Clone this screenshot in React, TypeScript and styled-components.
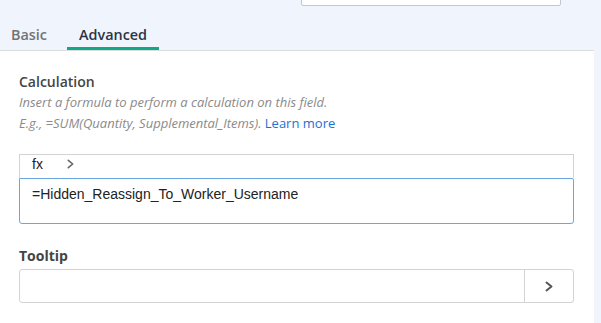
import React from "react";
import styled, {createGlobalStyle} from "styled-components";

const GlobalStyle = createGlobalStyle`
    html, body {
        margin: 0;
        padding: 0;
        background: #f0f5fd;
    }
    body {
        font-family: "Open Sans", "Noto Sans", sans-serif;
        color: #444;
    }
`;

const StyledPage = styled.div`
    width: 594px;
    min-height: 100vh;
    display: flex;
    flex-direction: column;
`;

const StyledTopBar = styled.div`
    height: 6px;
    display: flex;
    justify-content: flex-end;
    padding-right: 33px;
`;

const StyledSearchBox = styled.div`
    width: 260px;
    height: 30px;
    margin-top: -24px;
    box-sizing: border-box;
    background: #fff;
    border: 1px solid #c6c6c6;
    border-radius: 0 0 2px 2px;
`;

const StyledTabBar = styled.nav`
    height: 44px;
    display: flex;
    gap: 9px;
    border-bottom: 1px solid #dcdcdc;
`;

const StyledTab = styled.button<{ $active?: boolean }>`
    display: flex;
    align-items: flex-end;
    padding: 0 12px 2px;
    margin: 0;
    background: none;
    border: none;
    border-bottom: 3px solid ${props => props.$active ? "#10a88b" : "transparent"};
    font-family: "Open Sans", sans-serif;
    font-size: 14.4px;
    line-height: 20px;
    font-weight: 600;
    color: ${props => props.$active ? "#2b3445" : "#737373"};
    cursor: pointer;

    &:first-child {
        padding-left: 11px;
        padding-right: 11px;
    }
`;

const StyledPanel = styled.main`
    flex: 1;
    background: #fff;
    padding: 21px 20px 0 19px;
    display: flex;
    flex-direction: column;
`;

const StyledLabel = styled.label<{ $bold?: boolean }>`
    font-size: 14px;
    line-height: 20px;
    font-weight: ${props => props.$bold ? 700 : 600};
    color: #444;
`;

const StyledHelp = styled.p`
    margin: 0;
    font-size: 13px;
    line-height: 21px;
    font-style: italic;
    color: #8a8a8a;
`;

const StyledLink = styled.a`
    font-style: normal;
    color: #1d6fd3;
    text-decoration: none;
`;

const StyledFormula = styled.div`
    margin-top: 20px;
    display: flex;
    flex-direction: column;
`;

const StyledFormulaHeader = styled.div`
    height: 22px;
    display: flex;
    align-items: flex-start;
    gap: 24px;
    padding: 1px 12px 0;
    border: 1px solid #d3d3d3;
    border-bottom: none;
    font-family: "Liberation Sans", Arial, sans-serif;
    font-size: 14px;
    line-height: 16px;
    color: #222;
`;

const StyledChevronWrap = styled.span`
    display: flex;
    align-items: center;
    height: 16px;
    color: #666;
`;

const StyledTextArea = styled.textarea`
    height: 46px;
    box-sizing: border-box;
    margin: 0;
    padding: 5px 12px;
    border: 1px solid #6aa6e0;
    border-radius: 0 2px 3px 3px;
    resize: none;
    outline: none;
    font-family: "Liberation Sans", Arial, sans-serif;
    font-size: 14px;
    line-height: 20px;
    color: #222;
`;

const StyledField = styled.div`
    margin-top: 22px;
    display: flex;
    flex-direction: column;
    gap: 3px;
`;

const StyledInputGroup = styled.div`
    height: 34px;
    box-sizing: border-box;
    display: flex;
    border: 1px solid #d3d3d3;
    border-radius: 3px;
`;

const StyledInput = styled.input`
    flex: 1;
    min-width: 0;
    border: none;
    outline: none;
    padding: 0 10px;
    font-family: "Open Sans", sans-serif;
    font-size: 13px;
    background: transparent;
`;

const StyledAddon = styled.button`
    width: 49px;
    display: flex;
    align-items: center;
    justify-content: center;
    padding: 0;
    background: none;
    border: none;
    border-left: 1px solid #d3d3d3;
    color: #555;
    cursor: pointer;
`;

function Chevron({width, height, stroke}: { width: number, height: number, stroke: number }) {
    return (
        <svg width={width} height={height} viewBox={`0 0 ${width} ${height}`} fill="none">
            <polyline
                points={`${stroke / 2 + 0.5},${stroke / 2 + 0.5} ${width - stroke / 2 - 0.5},${height / 2} ${stroke / 2 + 0.5},${height - stroke / 2 - 0.5}`}
                stroke="currentColor"
                strokeWidth={stroke}
                strokeLinecap="round"
                strokeLinejoin="round"
            />
        </svg>
    );
}

export default function App() {
    return (
        <>
            <GlobalStyle/>
            <StyledPage>
                <StyledTopBar>
                    <StyledSearchBox/>
                </StyledTopBar>
                <StyledTabBar>
                    <StyledTab>Basic</StyledTab>
                    <StyledTab $active>Advanced</StyledTab>
                </StyledTabBar>
                <StyledPanel>
                    <StyledLabel htmlFor="calculation">Calculation</StyledLabel>
                    <StyledHelp>
                        Insert a formula to perform a calculation on this field.<br/>
                        E.g., =SUM(Quantity, Supplemental_Items). <StyledLink href="#">Learn more</StyledLink>
                    </StyledHelp>
                    <StyledFormula>
                        <StyledFormulaHeader>
                            <span>fx</span>
                            <StyledChevronWrap>
                                <Chevron width={7} height={10} stroke={1.6}/>
                            </StyledChevronWrap>
                        </StyledFormulaHeader>
                        <StyledTextArea id="calculation" defaultValue="=Hidden_Reassign_To_Worker_Username"/>
                    </StyledFormula>
                    <StyledField>
                        <StyledLabel htmlFor="tooltip" $bold>Tooltip</StyledLabel>
                        <StyledInputGroup>
                            <StyledInput id="tooltip"/>
                            <StyledAddon>
                                <Chevron width={8} height={11} stroke={2}/>
                            </StyledAddon>
                        </StyledInputGroup>
                    </StyledField>
                </StyledPanel>
            </StyledPage>
        </>
    );
}
